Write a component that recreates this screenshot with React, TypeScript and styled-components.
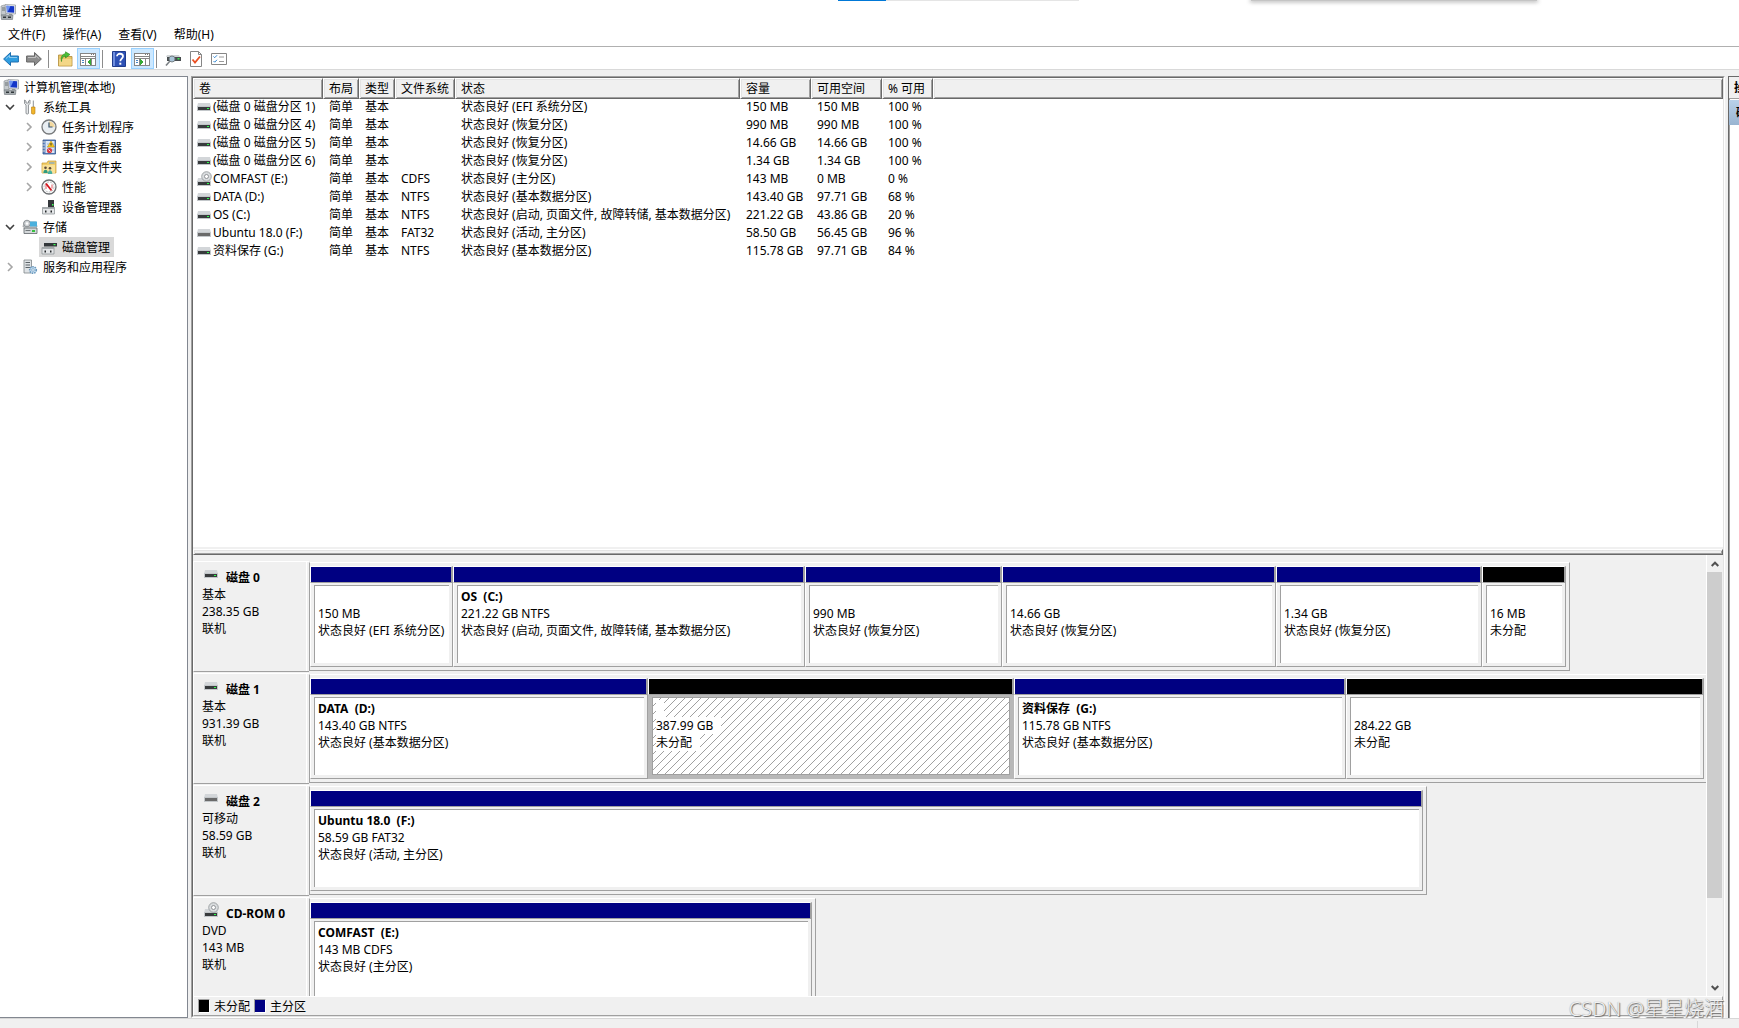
import React from 'react';
import styled, { createGlobalStyle, css } from 'styled-components';

const face = '#f0f0f0';
const shade = '#a0a0a0';
const dark = '#696969';
const soft = '#e3e3e3';

const GlobalStyle = createGlobalStyle`
  *, *::before, *::after { box-sizing: border-box; }
  body {
    margin: 0;
    background: ${face};
    color: #000;
    font: 12px/17px "Noto Sans", "Noto Sans CJK SC", sans-serif;
    overflow: hidden;
  }
  button { font: inherit; color: inherit; border: 0; background: none; padding: 0; margin: 0; }
  svg { display: block; flex: none; }
`;

/* ---------- window chrome ---------- */

const Window = styled.div`
  display: flex;
  flex-direction: column;
  height: 100vh;
  position: relative;
`;

const TitleBar = styled.header`
  display: flex;
  align-items: center;
  gap: 5px;
  height: 23px;
  background: #fff;
`;

const WindowTitle = styled.h1`
  margin: 0;
  font-size: 12px;
  font-weight: 400;
`;

const ProgressLine = styled.div`
  position: absolute;
  top: 0;
  left: 838px;
  width: 241px;
  height: 1px;
  background: linear-gradient(to right, #0078d7 48px, #e5e5e5 48px);
`;

const PopupShadow = styled.div`
  position: absolute;
  top: 0;
  left: 1251px;
  width: 286px;
  height: 1px;
  background: #c4c4c4;
  box-shadow: 0 0 4px 1px rgba(0, 0, 0, 0.35);
`;

const MenuBar = styled.nav`
  display: flex;
  gap: 17px;
  height: 24px;
  padding-left: 8px;
  background: #fff;
  border-bottom: 1px solid #b0b0b0;
`;

const ToolBar = styled.div`
  display: flex;
  height: 23px;
  padding-top: 1px;
  background: #fff;
  border-bottom: 1px solid #d9d9d9;
`;

const ToolButton = styled.button<{ $on?: boolean }>`
  display: flex;
  align-items: center;
  justify-content: center;
  width: 23px;
  height: 21px;
  padding: 1px 1px 0 0;
  ${(p) => p.$on && css`
    background: #cce8ff;
    box-shadow: inset 0 0 0 1px #99d1ff;
  `}
`;

const ToolSeparator = styled.span`
  width: 1px;
  height: 18px;
  margin: 2px 5px 0 2px;
  background: #8c8c8c;
`;

const Workspace = styled.main`
  flex: 1;
  min-height: 0;
  display: grid;
  grid-template-columns: 188px minmax(0, 1fr) 11px;
  grid-template-rows: minmax(0, 1fr);
  column-gap: 3px;
  padding-top: 6px;
`;

const StatusBar = styled.footer`
  display: flex;
  justify-content: flex-end;
  height: 10px;
  padding: 2px 41px 0 0;
  border-top: 1px solid #d7d7d7;
`;

const StatusDivider = styled.span`
  width: 1px;
  background: #d7d7d7;
`;

const Watermark = styled.div`
  position: absolute;
  right: 15px;
  bottom: 5px;
  font-size: 20px;
  line-height: 28px;
  font-weight: 300;
  color: #f2f2f2;
  text-shadow: 1px 1px 1px #666, 0 0 1px #888;
`;

/* ---------- console tree ---------- */

const TreePane = styled.nav`
  background: #fff;
  border: solid #828790;
  border-width: 1px 1px 1px 0;
  overflow: hidden;
`;

const TreeList = styled.ul`
  list-style: none;
  margin: 0;
  padding: 0;
`;

const TreeRow = styled.div<{ $level: number }>`
  display: flex;
  align-items: center;
  height: 20px;
  padding-left: ${(p) => (p.$level === 0 ? 3 : p.$level * 19 - 16)}px;
`;

const Chevron = styled.button`
  display: flex;
  align-items: center;
  justify-content: center;
  width: 14px;
  height: 20px;
  margin-right: 3px;
`;

const TreeLabel = styled.button<{ $selected?: boolean }>`
  display: flex;
  align-items: center;
  gap: 5px;
  height: 20px;
  padding: 0 4px 0 2px;
  background: ${(p) => (p.$selected ? '#d9d9d9' : 'transparent')};
`;

const RootLabel = styled(TreeLabel)`
  padding-left: 0;
`;

/* ---------- centre pane ---------- */

const Sunken = styled.section`
  display: flex;
  flex-direction: column;
  min-width: 0;
  border: 1px solid;
  border-color: ${shade} #fff #fff ${shade};
`;

const SunkenInner = styled.div`
  flex: 1;
  min-height: 0;
  display: flex;
  flex-direction: column;
  border: 1px solid;
  border-color: ${dark} ${soft} ${soft} ${dark};
`;

const VolumePane = styled.div`
  flex: 469 1 0;
  min-height: 0;
  background: #fff;
  overflow: hidden;
`;

const VolumeTable = styled.table`
  width: 100%;
  table-layout: fixed;
  border-collapse: separate;
  border-spacing: 0;
`;

const Col = styled.col<{ $w?: number }>`
  width: ${(p) => (p.$w ? `${p.$w}px` : 'auto')};
`;

const HeadCell = styled.th`
  height: 21px;
  padding: 0 0 0 5px;
  text-align: left;
  font-weight: 400;
  white-space: nowrap;
  background: ${face};
  border: 1px solid;
  border-color: #fff ${dark} ${dark} #fff;
  box-shadow: inset 1px 1px ${soft}, inset -1px -1px ${shade};
`;

const Cell = styled.td`
  height: 18px;
  padding: 0 0 0 6px;
  line-height: 16px;
  vertical-align: top;
  white-space: nowrap;
`;

const VolumeCell = styled(Cell)`
  padding-left: 4px;
`;

const VolumeName = styled.span`
  display: flex;
  height: 18px;
`;

const Splitter = styled.div`
  height: 6px;
  margin-top: 2px;
  background: ${face};
  border: 1px solid;
  border-color: #fff ${dark} ${dark} #fff;
  box-shadow: inset 1px 1px ${soft}, inset -1px -1px ${shade};
`;

const DiskPane = styled.div`
  flex: 441 1 0;
  min-height: 0;
  display: flex;
`;

const DiskList = styled.div`
  flex: 1;
  min-width: 0;
  padding-top: 6px;
  overflow: hidden;
`;

const DiskRow = styled.article`
  display: flex;
  height: 112px;
`;

const DiskLabel = styled.div`
  width: 116px;
  height: 111px;
  padding: 4px 0 0 8px;
  border: solid;
  border-width: 1px 0 1px 1px;
  border-color: #fff #fff ${shade} #fff;
  background: linear-gradient(#fff, #fff) right 2px top / 1px 100% no-repeat;
`;

const DiskHead = styled.div`
  display: flex;
  height: 20px;
  gap: 6px;
  padding-left: 2px;
`;

const DiskTitle = styled.strong`
  align-self: flex-end;
`;

const Line = styled.div`
  height: 17px;
  white-space: pre;
`;

const Frame = styled.div<{ $span: number; $cut?: boolean }>`
  flex: ${(p) => p.$span} 1 0;
  min-width: 0;
  display: flex;
  height: 109px;
  margin-top: 1px;
  padding: ${(p) => (p.$cut ? '3px 2px 3px 0' : '3px 3px 3px 0')};
  border: solid;
  border-width: ${(p) => (p.$cut ? '1px 0 1px 1px' : '1px')};
  border-color: #fff ${shade} ${shade} ${shade};
`;

const Rest = styled.div<{ $span: number }>`
  flex: ${(p) => p.$span} 1 0;
`;

const PartitionBox = styled.div<{ $span: number }>`
  flex: ${(p) => p.$span} 1 0;
  min-width: 0;
  display: flex;
  flex-direction: column;
`;

const Stripe = styled.div<{ $free?: boolean }>`
  height: 17px;
  background: ${(p) => (p.$free ? '#000' : '#000082')};
  border: solid;
  border-width: 1px 2px 1px 1px;
  border-color: #fff ${shade} ${shade} #fff;
`;

const hatch =
  "url(\"data:image/svg+xml,%3Csvg xmlns='http://www.w3.org/2000/svg' width='8' height='8' shape-rendering='crispEdges' fill='%23a0a0a0'%3E%3Cpath d='M0 7h1v1H0zM1 6h1v1H1zM2 5h1v1H2zM3 4h1v1H3zM4 3h1v1H4zM5 2h1v1H5zM6 1h1v1H6zM7 0h1v1H7z'/%3E%3C/svg%3E\")";

const Body = styled.div<{ $selected?: boolean }>`
  flex: 1;
  display: flex;
  padding: 2px 3px 3px;
  border: solid;
  border-width: 0 1px 1px;
  border-color: ${(p) => (p.$selected ? '#b8b8b8' : `#fff ${shade} ${shade} #fff`)};
  background: ${(p) => (p.$selected ? '#b8b8b8' : face)};
`;

const Info = styled.div<{ $selected?: boolean }>`
  flex: 1;
  min-width: 0;
  overflow: hidden;
  padding: 2px 3px 0;
  border: solid ${shade};
  border-width: ${(p) => (p.$selected ? '1px' : '1px 0 0 1px')};
  background: #fff ${(p) => (p.$selected ? hatch : '')};
`;

const InfoLine = styled(Line)`
  overflow: hidden;
`;

const InfoText = styled.span<{ $bold?: boolean }>`
  display: inline-block;
  height: 17px;
  padding-right: 8px;
  background: #fff;
  font-weight: ${(p) => (p.$bold ? 700 : 400)};
`;

const ScrollBar = styled.div`
  display: flex;
  flex-direction: column;
  width: 17px;
  border-left: 1px solid #fff;
`;

const ScrollArrow = styled.button`
  display: flex;
  align-items: center;
  justify-content: center;
  height: 17px;
  padding-right: 1px;
`;

const ScrollTrack = styled.div`
  flex: 1;
`;

const ScrollThumb = styled.div`
  height: 80%;
  margin-right: 1px;
  background: #cdcdcd;
`;

const Legend = styled.div`
  display: flex;
  align-items: center;
  gap: 4px;
  height: 20px;
  padding: 0 0 0 4px;
  border: 1px solid;
  border-color: #fff ${shade} ${shade} #fff;
`;

const Swatch = styled.span<{ $free?: boolean }>`
  width: 12px;
  height: 14px;
  background: ${(p) => (p.$free ? '#000' : '#000082')};
  border: 1px solid;
  border-color: ${shade} #fff #fff ${shade};
`;

/* ---------- actions pane, mostly out of view ---------- */

const ActionsPane = styled.aside`
  background: #fff;
  border: solid ${dark};
  border-width: 1px 0 0 1px;
  box-shadow: inset 1px 0 ${shade};
  overflow: hidden;
  white-space: nowrap;
`;

const ActionsTitle = styled.div`
  height: 22px;
  padding: 2px 0 0 5px;
  font-weight: 700;
  background: ${face};
  border-bottom: 1px solid ${shade};
`;

const ActionsGroup = styled.div`
  height: 25px;
  margin-top: 1px;
  padding: 4px 0 0 7px;
  font-weight: 700;
  background: linear-gradient(#b9d1ea, #99b4d1);
`;

/* ---------- icons ---------- */

type DriveKind = 'disk' | 'removable' | 'cd';

function DriveIcon({ kind }: { kind: DriveKind }) {
  const y = kind === 'cd' ? 7 : 4;
  return (
    <svg width="16" height="16" viewBox="0 0 16 16" aria-hidden="true">
      <path d={`M1 ${y}h12l1 4H0z`} fill="#d3d6d9" />
      <path d={`M0 ${y + 3}h14v5H0z`} fill="#c3c7ca" />
      <path d={`M1 ${y + 4}h12v3H1z`} fill={kind === 'removable' ? '#6a6a6a' : '#383b3d'} />
      {kind !== 'removable' && <path d={`M10 ${y + 5}h2v1h-2z`} fill="#2bff4a" />}
      {kind === 'cd' && (
        <>
          <circle cx="9.5" cy="5.5" r="4.8" fill="#d9dcde" stroke="#8f9497" strokeWidth="0.8" />
          <circle cx="9.5" cy="5.5" r="2" fill="#fff" stroke="#7d8285" strokeWidth="0.8" />
        </>
      )}
    </svg>
  );
}

const Svg = ({ children, size = 16 }: { children: React.ReactNode; size?: number }) => (
  <svg width={size} height={size} viewBox="0 0 16 16" aria-hidden="true">{children}</svg>
);

const ComputerIcon = () => (
  <Svg>
    <path d="M1 2l3-1 2 1v9H1z" fill="#c5cacd" stroke="#8b9195" strokeWidth="0.6" />
    <path d="M2 4h3M2 6h3" stroke="#687075" />
    <path d="M5 .5l10.500 .5v9L6 9.500z" fill="#eef0f2" stroke="#8b9195" strokeWidth="0.7" />
    <path d="M6.500 1.800l7.700 .4v6.600L7 8.300z" fill="#1436c8" />
    <path d="M6.500 1.800l4 .2-3 6.300-.6-.1z" fill="#6d94f2" />
    <path d="M9 10h3v1.500H9z" fill="#9aa0a3" />
    <path d="M1 11h12l-.5 4.500H1.500z" fill="#a7adb0" stroke="#6d7478" strokeWidth="0.6" />
    <path d="M3 12.500h3v1.500H3zM8 12.500h3v1.500H8z" fill="#30373b" />
  </Svg>
);

const ToolsIcon = () => (
  <Svg>
    <path d="M2.500 1v3.500L4 6v8.500q1.200 1.200 2.500 0V6L8 4.500V1L6.500 2v2h-2.500V2z" fill="#e6e8ea" stroke="#7c8285" strokeWidth="0.8" />
    <path d="M10.800 1.500h1v6.500h-1z" fill="#8c9194" />
    <path d="M9.500 8h3.500v6.500q-1.700 1.500-3.500 0z" fill="#f0b52c" stroke="#b97d10" strokeWidth="0.6" />
  </Svg>
);

const ClockIcon = () => (
  <Svg>
    <circle cx="8" cy="8" r="7" fill="#e9eef2" stroke="#77797b" strokeWidth="1.300" />
    <path d="M8 8V2.300A5.700 5.700 0 0 1 13.700 8z" fill="#f3d9a0" />
    <path d="M8 3.500V8h3.500" fill="none" stroke="#37536e" strokeWidth="1.200" />
  </Svg>
);

const EventIcon = () => (
  <Svg>
    <path d="M2 1h12.500v14H2z" fill="#5f86c4" stroke="#33548c" strokeWidth="0.8" />
    <path d="M4.500 2h9v12h-9z" fill="#dce7f5" />
    <path d="M6 5h7M6 8h7M6 11h7" stroke="#8ba7d0" strokeWidth="0.8" />
    <path d="M1 3h3M1 6h3M1 9h3M1 12h3" stroke="#d9d9d9" />
    <path d="M10 2l3.500 6h-7z" fill="#f8c81c" stroke="#b88a00" strokeWidth="0.5" />
    <path d="M10 4v2.500" stroke="#333" />
    <circle cx="8.500" cy="11.500" r="2.600" fill="#d83a42" />
    <path d="M7.500 10.500l2 2" stroke="#fff" strokeWidth="0.8" />
  </Svg>
);

const SharedFolderIcon = () => (
  <Svg>
    <path d="M1 4h5l1-2h8v12H1z" fill="#f1ce6b" stroke="#c79a30" strokeWidth="0.7" />
    <path d="M8 3.500h5.500v1H8z" fill="#5d9be0" />
    <path d="M1.500 6H14v8H1.500z" fill="#f9e199" />
    <circle cx="4.500" cy="8.800" r="1.300" fill="#5b4a37" />
    <path d="M2.300 14c0-4.500 4.500-4.500 4.500 0z" fill="#2f9a7e" />
    <circle cx="9" cy="9.300" r="1.300" fill="#5b4a37" />
    <path d="M6.800 15c0-5 4.500-5 4.500 0z" fill="#49b0a0" />
  </Svg>
);

const GaugeIcon = () => (
  <Svg>
    <circle cx="8" cy="8" r="7" fill="#fff" stroke="#6c6f72" strokeWidth="1.300" />
    <circle cx="8" cy="8" r="5" fill="none" stroke="#9ea2a5" strokeWidth="0.700" strokeDasharray="2 1" />
    <path d="M5 4.500l5.500 7" stroke="#d3131c" strokeWidth="1.800" />
    <path d="M5 10V5M11 5.500v4" stroke="#d3131c" strokeWidth="0.700" />
  </Svg>
);

const DeviceIcon = () => (
  <Svg>
    <path d="M7 1h6v8H7z" fill="#34383b" />
    <path d="M11 5h1.500v1.500H11z" fill="#3cff55" />
    <path d="M1.500 8.500h12V15h-12z" fill="#e4e6e8" stroke="#84898c" strokeWidth="0.7" />
    <path d="M1.500 8.500h12v1.500h-12z" fill="#a7acaf" />
    <path d="M4 11.500h1.500v2H4zM9.500 11.500H11v2H9.500z" fill="#24282a" />
  </Svg>
);

const StorageIcon = () => (
  <Svg>
    <path d="M2 3h12l1 5H1z" fill="#dfe2e4" stroke="#868b8e" strokeWidth="0.700" />
    <circle cx="5" cy="4.500" r="3.300" fill="#cfd3d6" stroke="#7c8285" strokeWidth="0.8" />
    <circle cx="5" cy="4.500" r="1.200" fill="#fff" />
    <path d="M8 2.500h7v5H8z" fill="#4ab0dd" />
    <path d="M2 9h13v5.500H2z" fill="#d4d8da" stroke="#5e6568" strokeWidth="0.8" />
    <path d="M10 11h3v2h-3z" fill="#36bf3f" />
    <path d="M3.500 11.500h5" stroke="#72787b" />
  </Svg>
);

const DiskManagementIcon = () => (
  <Svg>
    <path d="M4 2h11l1 2.500H3z" fill="#d5d8da" />
    <path d="M3 4h13v3.500H3z" fill="#33373a" />
    <path d="M12.500 5h2v1.200h-2z" fill="#3cff55" />
    <path d="M1 8.500h12V15H1z" fill="#e4e6e8" stroke="#84898c" strokeWidth="0.7" />
    <path d="M1 8.500h12V10H1z" fill="#a7acaf" />
    <path d="M3.500 11.500H5v2H3.500zM9 11.500h1.500v2H9z" fill="#24282a" />
  </Svg>
);

const ServicesIcon = () => (
  <Svg>
    <path d="M2 1h7.500v13H2z" fill="#dfe3e6" stroke="#7e8588" strokeWidth="0.8" />
    <path d="M3.500 3.500H8M3.500 6H8M3.500 8.500H8" stroke="#5b6367" />
    <circle cx="11" cy="11" r="3.300" fill="#c4ddf0" stroke="#6998be" strokeWidth="1.600" strokeDasharray="1.500 0.900" />
    <circle cx="11" cy="11" r="1.300" fill="#fff" stroke="#6998be" strokeWidth="0.700" />
  </Svg>
);

const ArrowIcon = ({ fill, edge, flip }: { fill: string; edge: string; flip?: boolean }) => (
  <Svg>
    <g transform={flip ? 'matrix(-1 0 0 1 16 0)' : undefined}>
      <path d="M.6 8L7.500 1.500v3.500h7.900v6H7.500v3.500z" fill={fill} stroke={edge} strokeWidth="1" strokeLinejoin="round" />
      <path d="M3 7.500L6.500 4.500v2H14" fill="none" stroke="#fff" strokeOpacity="0.45" />
    </g>
  </Svg>
);

const FolderUpIcon = () => (
  <Svg>
    <path d="M1.500 4h5l1 1.500H15V15H1.500z" fill="#e9c565" stroke="#b08c38" strokeWidth="0.8" />
    <path d="M2 8h12.500v6.500H2z" fill="#f3d788" />
    <path d="M4.500 10.500C4.500 7 6 5.500 8.500 5V7L13 3.500 8.500 .8v1.700C5 3.500 3.500 6 4.500 10.500z" fill="#4bbf38" stroke="#2b861f" strokeWidth="0.6" />
  </Svg>
);

const PaneIcon = ({ right }: { right?: boolean }) => (
  <svg width="16" height="16" viewBox="0 0 16 16" shapeRendering="crispEdges" aria-hidden="true">
    <path d="M0 2h16v13H0z" fill="#868686" />
    <path d="M1 3h14v2H1zM1 6h14v1H1zM1 8h4v6H1zM6 8h5v6H6zM12 8h3v6h-3z" fill="#fff" />
    <path d="M11 3h1v1h-1zM13 3h1v1h-1z" fill="#777" />
    <path d="M2 9h2v1H2zM2 11h2v1H2z" fill="#4a86c5" />
    {right
      ? <path d="M6 8l4 3-4 3z" fill="#35a935" />
      : <path d="M11 8l-4 3 4 3z" fill="#35a935" />}
  </svg>
);

const HelpIcon = () => (
  <Svg>
    <path d="M1.500 .5h13v15h-13z" fill="#2e51b5" stroke="#203c8c" />
    <path d="M2 1h2v14H2z" fill="#6f8ede" />
    <path d="M6 5.300C6 1.800 12 2 12 5.300c0 2.200-2.700 2.400-2.700 5" fill="none" stroke="#fff" strokeWidth="1.800" />
    <path d="M8.300 11.700h2v2h-2z" fill="#fff" />
  </Svg>
);

const RescanIcon = () => (
  <Svg>
    <path d="M2 4h12l1 2H1z" fill="#d0d4d6" />
    <path d="M2 6h14v4H2z" fill="#474c4f" />
    <path d="M12.500 7h2v1.500h-2z" fill="#39e84f" />
    <path d="M1 14.500L5 10" stroke="#7b8184" strokeWidth="1.600" />
    <circle cx="7" cy="8" r="3" fill="#a9c4d8" stroke="#6f777b" strokeWidth="0.9" />
  </Svg>
);

const CheckDocIcon = () => (
  <Svg>
    <path d="M2.500 .5h8l3 3v12h-11z" fill="#fff" stroke="#868686" />
    <path d="M10.500 .5v3h3" fill="none" stroke="#868686" />
    <path d="M4.500 8.500l2.500 3 5-6" fill="none" stroke="#ea4f22" strokeWidth="1.800" />
  </Svg>
);

const ListIcon = () => (
  <Svg>
    <path d="M.5 2.500h15v11H.5z" fill="#fff" stroke="#868686" />
    <path d="M8 6h5M8 10.500h5" stroke="#9a9a9a" />
    <path d="M2.500 5.500l1.200 1.200L6 4.300M2.500 10l1.200 1.200L6 8.800" fill="none" stroke="#2f86d2" />
  </Svg>
);

const TreeChevron = ({ open }: { open?: boolean }) => (
  <svg width="10" height="10" viewBox="0 0 10 10" aria-hidden="true">
    <path
      d={open ? 'M1 3l4 4 4-4' : 'M3 1l4 4-4 4'}
      fill="none"
      stroke={open ? '#404040' : '#a6a6a6'}
      strokeWidth="1.600"
    />
  </svg>
);

const ScrollGlyph = ({ down }: { down?: boolean }) => (
  <svg width="8" height="8" viewBox="0 0 8 8" aria-hidden="true">
    <path d={down ? 'M.7 2L4 5.300 7.300 2' : 'M.7 6L4 2.700 7.300 6'} fill="none" stroke="#505050" strokeWidth="2" />
  </svg>
);

/* ---------- data ---------- */

const menus = ['文件(F)', '操作(A)', '查看(V)', '帮助(H)'];

interface TreeItem {
  label: string;
  level: number;
  icon: React.ReactNode;
  state: 'open' | 'closed' | 'leaf';
  selected?: boolean;
}

const tree: TreeItem[] = [
  { label: '系统工具', level: 1, icon: <ToolsIcon />, state: 'open' },
  { label: '任务计划程序', level: 2, icon: <ClockIcon />, state: 'closed' },
  { label: '事件查看器', level: 2, icon: <EventIcon />, state: 'closed' },
  { label: '共享文件夹', level: 2, icon: <SharedFolderIcon />, state: 'closed' },
  { label: '性能', level: 2, icon: <GaugeIcon />, state: 'closed' },
  { label: '设备管理器', level: 2, icon: <DeviceIcon />, state: 'leaf' },
  { label: '存储', level: 1, icon: <StorageIcon />, state: 'open' },
  { label: '磁盘管理', level: 2, icon: <DiskManagementIcon />, state: 'leaf', selected: true },
  { label: '服务和应用程序', level: 1, icon: <ServicesIcon />, state: 'closed' },
];

const columns: { title: string; width?: number }[] = [
  { title: '卷', width: 130 },
  { title: '布局', width: 36 },
  { title: '类型', width: 36 },
  { title: '文件系统', width: 60 },
  { title: '状态', width: 285 },
  { title: '容量', width: 71 },
  { title: '可用空间', width: 71 },
  { title: '% 可用', width: 51 },
  { title: '' },
];

const volumes: { kind: DriveKind; name: string; fs: string; status: string; size: string; free: string; pct: string }[] = [
  { kind: 'disk', name: '(磁盘 0 磁盘分区 1)', fs: '', status: '状态良好 (EFI 系统分区)', size: '150 MB', free: '150 MB', pct: '100 %' },
  { kind: 'disk', name: '(磁盘 0 磁盘分区 4)', fs: '', status: '状态良好 (恢复分区)', size: '990 MB', free: '990 MB', pct: '100 %' },
  { kind: 'disk', name: '(磁盘 0 磁盘分区 5)', fs: '', status: '状态良好 (恢复分区)', size: '14.66 GB', free: '14.66 GB', pct: '100 %' },
  { kind: 'disk', name: '(磁盘 0 磁盘分区 6)', fs: '', status: '状态良好 (恢复分区)', size: '1.34 GB', free: '1.34 GB', pct: '100 %' },
  { kind: 'cd', name: 'COMFAST (E:)', fs: 'CDFS', status: '状态良好 (主分区)', size: '143 MB', free: '0 MB', pct: '0 %' },
  { kind: 'disk', name: 'DATA (D:)', fs: 'NTFS', status: '状态良好 (基本数据分区)', size: '143.40 GB', free: '97.71 GB', pct: '68 %' },
  { kind: 'disk', name: 'OS (C:)', fs: 'NTFS', status: '状态良好 (启动, 页面文件, 故障转储, 基本数据分区)', size: '221.22 GB', free: '43.86 GB', pct: '20 %' },
  { kind: 'removable', name: 'Ubuntu 18.0 (F:)', fs: 'FAT32', status: '状态良好 (活动, 主分区)', size: '58.50 GB', free: '56.45 GB', pct: '96 %' },
  { kind: 'disk', name: '资料保存 (G:)', fs: 'NTFS', status: '状态良好 (基本数据分区)', size: '115.78 GB', free: '97.71 GB', pct: '84 %' },
];

interface Partition {
  span: number;
  name?: string;
  size: string;
  status: string;
  free?: boolean;
  selected?: boolean;
}

interface Disk {
  name: string;
  kind: DriveKind;
  info: string[];
  rest: number;
  parts: Partition[];
}

const disks: Disk[] = [
  {
    name: '磁盘 0', kind: 'disk', info: ['基本', '238.35 GB', '联机'], rest: 136,
    parts: [
      { span: 143, size: '150 MB', status: '状态良好 (EFI 系统分区)' },
      { span: 352, name: 'OS  (C:)', size: '221.22 GB NTFS', status: '状态良好 (启动, 页面文件, 故障转储, 基本数据分区)' },
      { span: 197, size: '990 MB', status: '状态良好 (恢复分区)' },
      { span: 274, size: '14.66 GB', status: '状态良好 (恢复分区)' },
      { span: 206, size: '1.34 GB', status: '状态良好 (恢复分区)' },
      { span: 84, size: '16 MB', status: '未分配', free: true },
    ],
  },
  {
    name: '磁盘 1', kind: 'disk', info: ['基本', '931.39 GB', '联机'], rest: 0,
    parts: [
      { span: 338, name: 'DATA  (D:)', size: '143.40 GB NTFS', status: '状态良好 (基本数据分区)' },
      { span: 366, size: '387.99 GB', status: '未分配', free: true, selected: true },
      { span: 332, name: '资料保存  (G:)', size: '115.78 GB NTFS', status: '状态良好 (基本数据分区)' },
      { span: 358, size: '284.22 GB', status: '未分配', free: true },
    ],
  },
  {
    name: '磁盘 2', kind: 'removable', info: ['可移动', '58.59 GB', '联机'], rest: 279,
    parts: [{ span: 1113, name: 'Ubuntu 18.0  (F:)', size: '58.59 GB FAT32', status: '状态良好 (活动, 主分区)' }],
  },
  {
    name: 'CD-ROM 0', kind: 'cd', info: ['DVD', '143 MB', '联机'], rest: 890,
    parts: [{ span: 502, name: 'COMFAST  (E:)', size: '143 MB CDFS', status: '状态良好 (主分区)' }],
  },
];

/* ---------- composed parts ---------- */

function PartitionView({ part }: { part: Partition }) {
  return (
    <PartitionBox $span={part.span}>
      <Stripe $free={part.free} />
      <Body $selected={part.selected}>
        <Info $selected={part.selected}>
          <InfoLine><InfoText $bold>{part.name}</InfoText></InfoLine>
          <InfoLine><InfoText>{part.size}</InfoText></InfoLine>
          <InfoLine><InfoText>{part.status}</InfoText></InfoLine>
        </Info>
      </Body>
    </PartitionBox>
  );
}

function DiskView({ disk }: { disk: Disk }) {
  const span = disk.parts.reduce((sum, p) => sum + p.span, 0);
  return (
    <DiskRow>
      <DiskLabel>
        <DiskHead>
          <DriveIcon kind={disk.kind} />
          <DiskTitle>{disk.name}</DiskTitle>
        </DiskHead>
        {disk.info.map((t) => <Line key={t}>{t}</Line>)}
      </DiskLabel>
      <Frame $span={span} $cut={disk.rest === 0}>
        {disk.parts.map((p, i) => <PartitionView key={i} part={p} />)}
      </Frame>
      {disk.rest > 0 && <Rest $span={disk.rest} />}
    </DiskRow>
  );
}

export default function App() {
  return (
    <Window>
      <GlobalStyle />
      <TitleBar>
        <ComputerIcon />
        <WindowTitle>计算机管理</WindowTitle>
      </TitleBar>
      <MenuBar>
        {menus.map((m) => <button key={m} type="button">{m}</button>)}
      </MenuBar>
      <ToolBar>
        <ToolButton aria-label="后退"><ArrowIcon fill="#2f9de0" edge="#1f6fb0" /></ToolButton>
        <ToolButton aria-label="前进"><ArrowIcon fill="#8c8c8c" edge="#666" flip /></ToolButton>
        <ToolSeparator />
        <ToolButton aria-label="上一级"><FolderUpIcon /></ToolButton>
        <ToolButton aria-label="显示控制台树" $on><PaneIcon /></ToolButton>
        <ToolSeparator />
        <ToolButton aria-label="帮助"><HelpIcon /></ToolButton>
        <ToolButton aria-label="显示操作窗格" $on><PaneIcon right /></ToolButton>
        <ToolSeparator />
        <ToolButton aria-label="重新扫描"><RescanIcon /></ToolButton>
        <ToolButton aria-label="属性"><CheckDocIcon /></ToolButton>
        <ToolButton aria-label="设置"><ListIcon /></ToolButton>
      </ToolBar>

      <Workspace>
        <TreePane>
          <TreeRow $level={0}>
            <RootLabel type="button"><ComputerIcon />计算机管理(本地)</RootLabel>
          </TreeRow>
          <TreeList>
            {tree.map((t) => (
              <li key={t.label}>
                <TreeRow $level={t.level}>
                  <Chevron type="button" aria-label={t.label}>
                    {t.state !== 'leaf' && <TreeChevron open={t.state === 'open'} />}
                  </Chevron>
                  <TreeLabel type="button" $selected={t.selected}>{t.icon}{t.label}</TreeLabel>
                </TreeRow>
              </li>
            ))}
          </TreeList>
        </TreePane>

        <Sunken>
          <SunkenInner>
            <VolumePane>
              <VolumeTable>
                <colgroup>
                  {columns.map((c, i) => <Col key={i} $w={c.width} />)}
                </colgroup>
                <thead>
                  <tr>{columns.map((c, i) => <HeadCell key={i}>{c.title}</HeadCell>)}</tr>
                </thead>
                <tbody>
                  {volumes.map((v) => (
                    <tr key={v.name}>
                      <VolumeCell><VolumeName><DriveIcon kind={v.kind} />{v.name}</VolumeName></VolumeCell>
                      <Cell>简单</Cell>
                      <Cell>基本</Cell>
                      <Cell>{v.fs}</Cell>
                      <Cell>{v.status}</Cell>
                      <Cell>{v.size}</Cell>
                      <Cell>{v.free}</Cell>
                      <Cell>{v.pct}</Cell>
                      <Cell />
                    </tr>
                  ))}
                </tbody>
              </VolumeTable>
            </VolumePane>
            <Splitter />
            <DiskPane>
              <DiskList>
                {disks.map((d) => <DiskView key={d.name} disk={d} />)}
              </DiskList>
              <ScrollBar>
                <ScrollArrow type="button" aria-label="向上滚动"><ScrollGlyph /></ScrollArrow>
                <ScrollTrack><ScrollThumb /></ScrollTrack>
                <ScrollArrow type="button" aria-label="向下滚动"><ScrollGlyph down /></ScrollArrow>
              </ScrollBar>
            </DiskPane>
            <Legend>
              <Swatch $free />未分配
              <Swatch />主分区
            </Legend>
          </SunkenInner>
        </Sunken>

        <ActionsPane>
          <ActionsTitle>操作</ActionsTitle>
          <ActionsGroup>磁盘管理</ActionsGroup>
        </ActionsPane>
      </Workspace>

      <StatusBar><StatusDivider /></StatusBar>
      <ProgressLine />
      <PopupShadow />
      <Watermark>CSDN @星星烧酒</Watermark>
    </Window>
  );
}
